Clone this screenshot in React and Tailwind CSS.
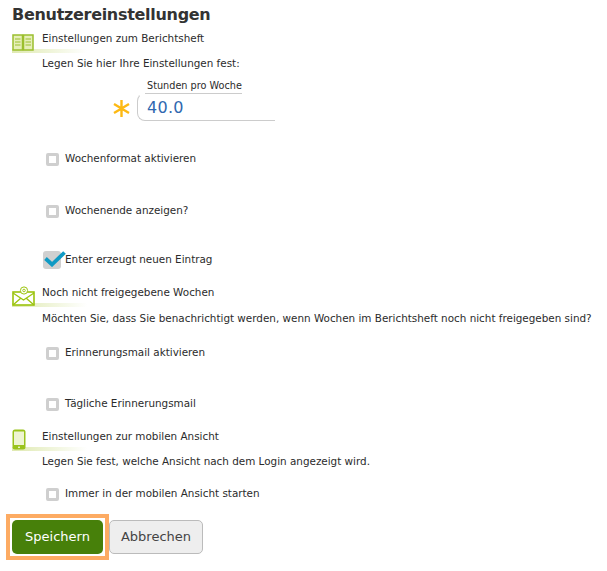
import React from 'react'

const BookIcon = () => (
  <svg width="22" height="18" viewBox="0 0 22 18" fill="none">
    <rect x="1" y="1" width="9.5" height="15" fill="#e6efb8" stroke="#9bbf2e" strokeWidth="1.5" />
    <rect x="11.5" y="1" width="9.5" height="15" fill="#e6efb8" stroke="#9bbf2e" strokeWidth="1.5" />
    <path d="M3 5h5.5M3 8h5.5M3 11h5.5M13.5 5H19M13.5 8H19M13.5 11H19" stroke="#9bbf2e" strokeWidth="1" />
  </svg>
)

const MailIcon = () => (
  <svg width="24" height="20" viewBox="0 0 24 20" fill="none">
    <rect x="1" y="6" width="21" height="13" fill="#fff" stroke="#9bc40e" strokeWidth="1.6" />
    <path d="M1 7l10.5 7L22 7M1 19l8-7M22 19l-8-7" stroke="#9bc40e" strokeWidth="1.3" />
    <circle cx="12" cy="4.5" r="3.6" fill="#fff" stroke="#9bc40e" strokeWidth="1" />
    <circle cx="12" cy="4.5" r="1.3" stroke="#9bc40e" strokeWidth="0.9" />
  </svg>
)

const PhoneIcon = () => (
  <svg width="14" height="21" viewBox="0 0 14 21" fill="none">
    <rect x="0.5" y="0.5" width="13" height="20" rx="2.5" fill="#9ac31c" />
    <rect x="2" y="2.5" width="10" height="13.5" fill="#eef4d2" />
    <path d="M6 18.3h2M7 17.5v1.6" stroke="#fff" strokeWidth="0.8" />
  </svg>
)

const SectionHead = ({ icon, children }) => (
  <div className="relative h-[26px] flex items-start">
    <div className="absolute left-[12px] bottom-0 w-[75px] h-[4px] bg-gradient-to-r from-[#dfe9b0] to-white" />
    <div className="relative w-[42px] pl-[12px] h-[26px] flex items-end pb-[1px]">{icon}</div>
    <span className="pt-[4px]">{children}</span>
  </div>
)

const Check = ({ label, className = '' }) => (
  <div className={`flex items-center pl-[46px] h-[14px] ${className}`}>
    <span className="w-[13px] h-[13px] shrink-0 bg-white border-[3px] border-[#cfcfcf] rounded-[2px] mt-[2px]" />
    <span className="ml-[6px]">{label}</span>
  </div>
)

export default function App() {
  return (
    <div className="w-[607px] h-[571px] bg-white overflow-hidden font-['DejaVu_Sans',Verdana,sans-serif] text-[10.4px] leading-[14px] text-[#2b2b2b]">
      <h1 className="pl-[12px] pt-[5px] text-[16px] leading-[20px] font-bold tracking-[-0.3px] text-[#333]">Benutzereinstellungen</h1>

      <div className="mt-[2px]">
        <SectionHead icon={<BookIcon />}>Einstellungen zum Berichtsheft</SectionHead>
      </div>
      <p className="pl-[42px] mt-[3px]">Legen Sie hier Ihre Einstellungen fest:</p>

      <div className="pl-[147px] mt-[10px] text-[9.7px] leading-[12px]">Stunden pro Woche</div>
      <div className="flex items-center pl-[112px] mt-[1px]">
        <svg width="19" height="19" viewBox="0 0 19 19" className="mt-[3px]">
          <path d="M9.5 1v17M2 5l15 9M17 5L2 14" stroke="#fdb913" strokeWidth="2.4" />
        </svg>
        <div className="relative ml-[6px] w-[138px] h-[28px] border-l border-b border-t border-[#ccc] border-t-transparent rounded-l-[8px] pl-[9px] pt-[2px] text-[16px] leading-[24px] text-[#2f68b0] tracking-[0.3px]">
          <span className="absolute left-[7px] top-[-1px] w-[97px] h-px bg-[#ccc]" />
          40.0
        </div>
      </div>

      <Check label="Wochenformat aktivieren" className="mt-[30px]" />
      <Check label="Wochenende anzeigen?" className="mt-[38px]" />

      <div className="flex items-center pl-[43px] mt-[31px] h-[22px]">
        <span className="relative w-[18px] h-[18px] shrink-0 bg-[#d0d0d0] rounded-[3px] mt-[1px]">
          <svg width="22" height="16" viewBox="0 0 22 16" className="absolute left-[1px] top-0" fill="none">
            <path d="M1.5 7.5l6.5 6L20.5 1.5" stroke="#0f9ac4" strokeWidth="3.8" />
          </svg>
        </span>
        <span className="ml-[4px]">Enter erzeugt neuen Eintrag</span>
      </div>

      <div className="mt-[11px]">
        <SectionHead icon={<MailIcon />}>Noch nicht freigegebene Wochen</SectionHead>
      </div>
      <p className="pl-[42px] mt-[4px]">Möchten Sie, dass Sie benachrichtigt werden, wenn Wochen im Berichtsheft noch nicht freigegeben sind?</p>

      <Check label="Erinnerungsmail aktivieren" className="mt-[20px]" />
      <Check label="Tägliche Erinnerungsmail" className="mt-[37px]" />

      <div className="mt-[15px]">
        <SectionHead icon={<PhoneIcon />}>Einstellungen zur mobilen Ansicht</SectionHead>
      </div>
      <p className="pl-[42px] mt-[3px]">Legen Sie fest, welche Ansicht nach dem Login angezeigt wird.</p>

      <Check label="Immer in der mobilen Ansicht starten" className="mt-[18px]" />

      <div className="flex items-center pl-[6px] mt-[14px]">
        <div className="border-[4px] border-[#fdab63] p-[2px]">
          <button className="block w-[91px] h-[34px] rounded-[5px] bg-[#47800a] text-white text-[13px]">Speichern</button>
        </div>
        <button className="w-[94px] h-[34px] rounded-[5px] bg-[#eeeeee] border border-[#bbb] text-[#444] text-[13px]">Abbrechen</button>
      </div>
    </div>
  )
}
